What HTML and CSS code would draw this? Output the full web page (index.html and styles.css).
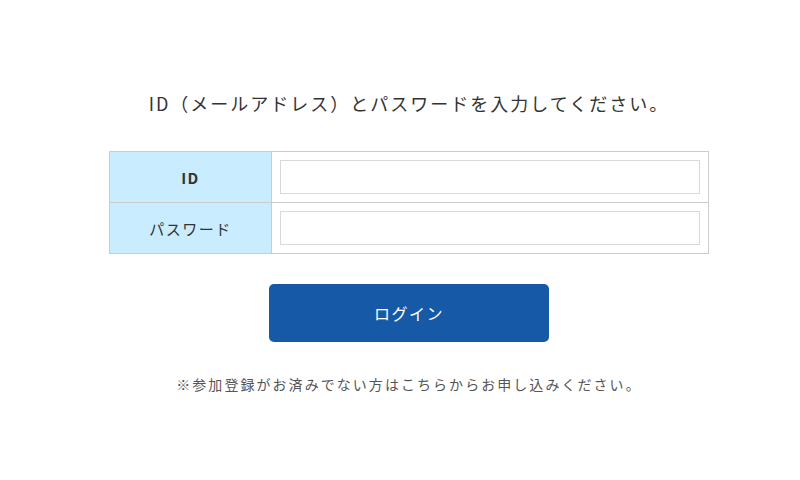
FILE: index.html
```html
<!DOCTYPE html>
<html lang="ja">
<head>
<meta charset="utf-8">
<link rel="stylesheet" href="styles.css">
</head>
<body>
<main class="login">
  <p class="lead">ID（メールアドレス）とパスワードを入力してください。</p>
  <table class="form-table">
    <tr>
      <th class="label label-bold">ID</th>
      <td><input type="text" class="field"></td>
    </tr>
    <tr>
      <th class="label">パスワード</th>
      <td><input type="password" class="field"></td>
    </tr>
  </table>
  <button class="btn" type="button">ログイン</button>
  <p class="note">※参加登録がお済みでない方はこちらからお申し込みください。</p>
</main>
</body>
</html>
```

FILE: styles.css
```css
html, body {
  margin: 0;
  padding: 0;
  background: #fff;
}
body {
  font-family: "Noto Sans CJK JP", "Noto Sans", sans-serif;
  color: #333;
  padding-left: 18px;
}
.login {
  width: 600px;
  margin: 0 auto;
  padding-top: 88px;
  display: flex;
  flex-direction: column;
  align-items: center;
}
.lead {
  margin: 0;
  font-size: 18px;
  line-height: 30px;
  letter-spacing: 2px;
  color: #333;
}
.form-table {
  margin-top: 33px;
  width: 600px;
  border-collapse: collapse;
}
.form-table th,
.form-table td {
  border: 1px solid #ccc;
  height: 50px;
  padding: 0;
}
.label {
  width: 161px;
  background: #c9edfe;
  font-size: 15px;
  font-weight: normal;
  color: #333;
  letter-spacing: 1.5px;
}
.label-bold {
  font-weight: bold;
}
.form-table td {
  padding: 0 8px;
}
.field {
  display: block;
  box-sizing: border-box;
  width: 100%;
  height: 34px;
  border: 1px solid #d9d9d9;
  background: #fff;
  margin: 0;
}
.btn {
  margin-top: 30px;
  width: 280px;
  height: 58px;
  border: none;
  border-radius: 5px;
  background: #165aa7;
  color: #fff;
  font-family: inherit;
  font-size: 16px;
  letter-spacing: 1.5px;
}
.note {
  margin: 30px 0 0;
  font-size: 14px;
  line-height: 24px;
  letter-spacing: 2.05px;
  color: #555;
}
```
